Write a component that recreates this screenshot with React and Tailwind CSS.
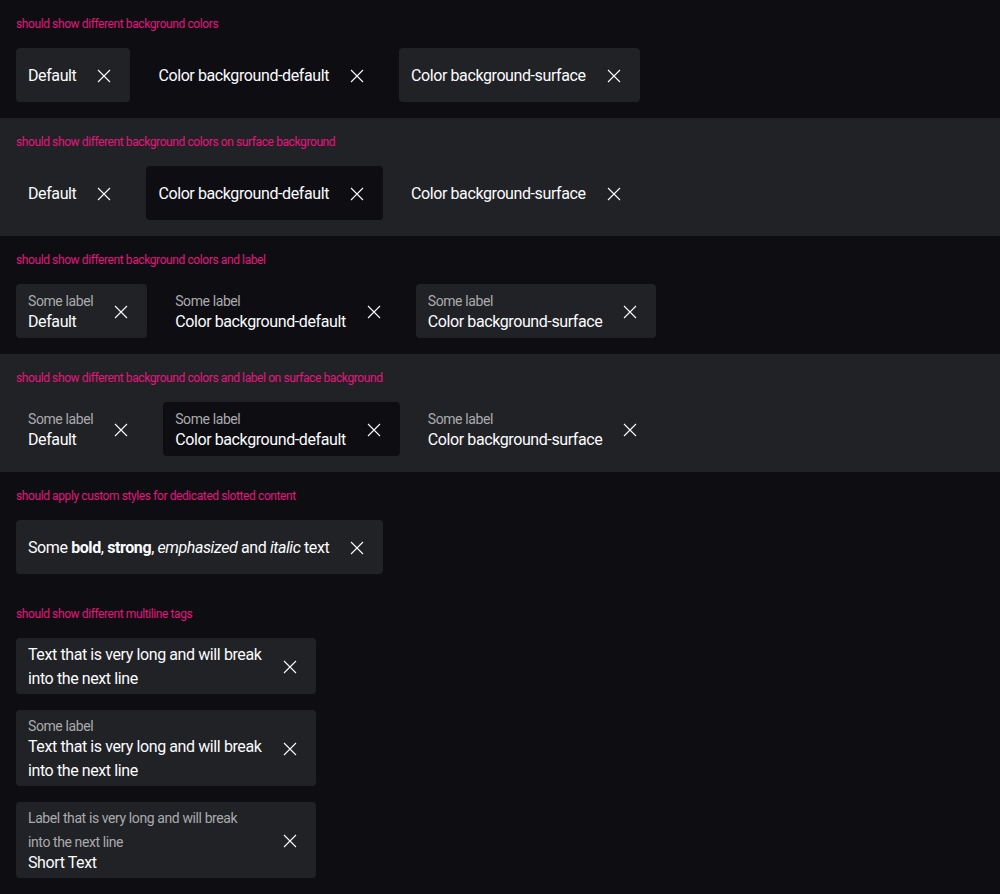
import React from "react";

const font = { fontFamily: "Roboto, 'Noto Sans', sans-serif" };

function CloseIcon() {
  return (
    <svg width="24" height="24" viewBox="0 0 24 24" className="shrink-0" aria-hidden="true">
      <path d="M6 6L18 18M18 6L6 18" stroke="#fbfcff" strokeWidth="1.1" fill="none" />
    </svg>
  );
}

function Tag({ bg = "bg-[#212225]", label, children, multiline = false }) {
  return (
    <button
      type="button"
      className={`flex items-center gap-4 min-h-[54px] rounded-[4px] pl-3 pr-[14px] pt-[5px] pb-[3px] text-left ${bg} ${
        multiline ? "w-[300px]" : ""
      }`}
    >
      <span className="flex flex-col min-w-0 flex-1">
        {label && (
          <span className="text-[14px] leading-[24px] -mt-px -mb-[3px] text-[#a9aaae] tracking-[-0.4px]">{label}</span>
        )}
        <span className="text-[16px] leading-[24px] text-[#fbfcff] tracking-[-0.4px]">{children}</span>
      </span>
      <CloseIcon />
    </button>
  );
}

function Section({ title, surface = false, children, col = false }) {
  return (
    <div className={`p-4 ${surface ? "bg-[#212225]" : ""}`}>
      <p className="text-[12px] leading-[16px] text-[#e3167f] mb-4 tracking-[-0.4px]">{title}</p>
      <div className={col ? "flex flex-col items-start gap-4" : "flex flex-wrap gap-4"}>{children}</div>
    </div>
  );
}

export default function App() {
  const dflt = "bg-[#0e0e12]";
  const surf = "bg-[#212225]";
  return (
    <div className="min-h-screen bg-[#0e0e12]" style={font}>
      <Section title="should show different background colors">
        <Tag bg={surf}>Default</Tag>
        <Tag bg={dflt}>Color background-default</Tag>
        <Tag bg={surf}>Color background-surface</Tag>
      </Section>
      <Section title="should show different background colors on surface background" surface>
        <Tag bg={surf}>Default</Tag>
        <Tag bg={dflt}>Color background-default</Tag>
        <Tag bg={surf}>Color background-surface</Tag>
      </Section>
      <Section title="should show different background colors and label">
        <Tag bg={surf} label="Some label">Default</Tag>
        <Tag bg={dflt} label="Some label">Color background-default</Tag>
        <Tag bg={surf} label="Some label">Color background-surface</Tag>
      </Section>
      <Section title="should show different background colors and label on surface background" surface>
        <Tag bg={surf} label="Some label">Default</Tag>
        <Tag bg={dflt} label="Some label">Color background-default</Tag>
        <Tag bg={surf} label="Some label">Color background-surface</Tag>
      </Section>
      <Section title="should apply custom styles for dedicated slotted content">
        <Tag bg={surf}>
          Some <b className="font-bold">bold</b>, <strong className="font-bold">strong</strong>,{" "}
          <em className="italic">emphasized</em> and <i className="italic">italic</i> text
        </Tag>
      </Section>
      <Section title="should show different multiline tags" col>
        <Tag bg={surf} multiline>
          Text that is very long and will break into the next line
        </Tag>
        <Tag bg={surf} multiline label="Some label">
          Text that is very long and will break into the next line
        </Tag>
        <Tag bg={surf} multiline label="Label that is very long and will break into the next line">
          Short Text
        </Tag>
      </Section>
    </div>
  );
}
